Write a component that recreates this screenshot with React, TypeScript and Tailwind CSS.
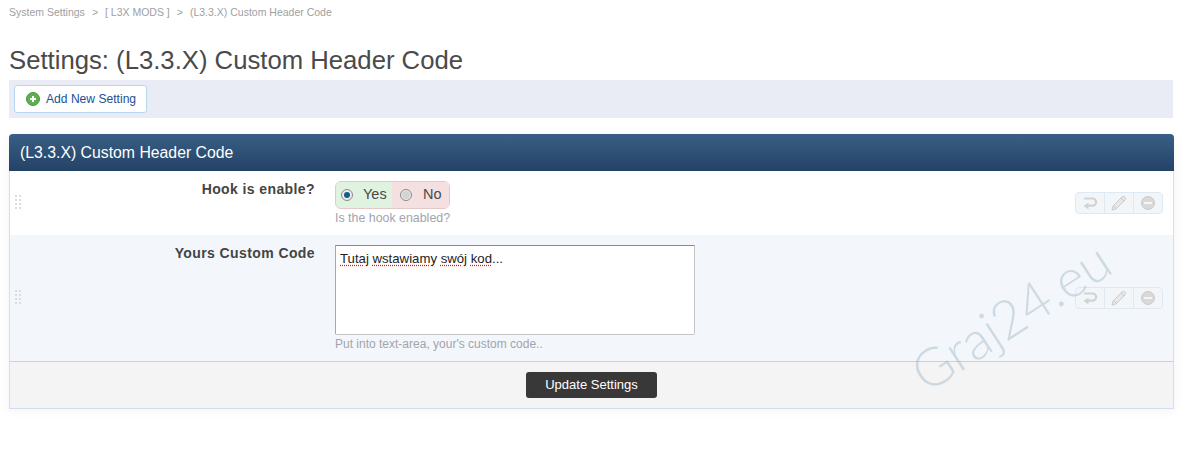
import React from 'react';

const DragHandle: React.FC = () => (
  <div className="grid grid-cols-2 gap-x-[2px] gap-y-[2px] w-[6px] shrink-0">
    {Array.from({ length: 8 }).map((_, i) => (
      <span key={i} className="w-[2px] h-[2px] bg-[#dcdcdc]" />
    ))}
  </div>
);

const RowControls: React.FC = () => (
  <div className="flex h-[22px] w-[88px] rounded-[4px] border border-[#dfe9f3] overflow-hidden bg-[#f3f6f9] divide-x divide-[#dfe9f3]">
    <button className="flex-1 flex items-center justify-center">
      <svg width="16" height="14" viewBox="0 0 16 14" fill="none">
        <path d="M2 2.5h8.5a3.6 3.6 0 0 1 0 7.2H6" stroke="#d2d2d2" strokeWidth="2.2" />
        <path d="M6.5 6.5L1.5 10l5 3.5z" fill="#d2d2d2" />
      </svg>
    </button>
    <button className="flex-1 flex items-center justify-center">
      <svg width="16" height="16" viewBox="0 0 16 16" fill="none">
        <path d="M1 15l1-4L11 2c1-1 2-1 3 0s1 2 0 3l-9 9z" fill="#e8e8e8" stroke="#cbcbcb" />
        <path d="M3 11l2 2M10 3l3 3" stroke="#cbcbcb" />
      </svg>
    </button>
    <button className="flex-1 flex items-center justify-center">
      <span className="w-[14px] h-[14px] rounded-full bg-[#d9d9d9] border border-[#cacaca] flex items-center justify-center">
        <span className="w-[8px] h-[2px] bg-[#f5f5f5]" />
      </span>
    </button>
  </div>
);

const Radio: React.FC<{ checked?: boolean }> = ({ checked }) => (
  <span className="w-[12px] h-[12px] rounded-full border border-[#8a8a8a] bg-[#ececec] flex items-center justify-center shrink-0">
    {checked ? <span className="w-[6px] h-[6px] rounded-full bg-[#0f5f8f]" /> : <span className="w-[8px] h-[8px] rounded-full bg-[#d4d4d4]" />}
  </span>
);

const Spell: React.FC<{ children: React.ReactNode }> = ({ children }) => (
  <span className="underline decoration-dotted decoration-[#d02020] underline-offset-2">{children}</span>
);

export default function App() {
  return (
    <div className="relative w-[1182px] h-[449px] overflow-hidden bg-white font-['Liberation_Sans',Arial,sans-serif] text-[#444]">
      <div className="pl-[9px] pt-[6px] h-[47px] text-[10.5px] leading-[13px] text-[#a0a0a0] flex gap-[7px] items-start">
        <span>System Settings</span>
        <span>&gt;</span>
        <span>[ L3X MODS ]</span>
        <span>&gt;</span>
        <span>(L3.3.X) Custom Header Code</span>
      </div>

      <h1 className="pl-[9px] h-[27px] text-[25.7px] leading-[27px] font-normal text-[#4a4a4a] whitespace-nowrap">
        Settings: (L3.3.X) Custom Header Code
      </h1>

      <div className="ml-[9px] mt-[6px] w-[1164px] h-[38px] bg-[#e9ecf4] flex items-center pl-[5px]">
        <button className="h-[28px] w-[133px] bg-white border border-[#b6d6f2] rounded-[3px] flex items-center pl-[11px] gap-[6px] text-[12.1px] text-[#1d4f91]">
          <span className="w-[14px] h-[14px] rounded-full bg-[#5cb04e] border border-[#4a9440] flex items-center justify-center">
            <svg width="8" height="8" viewBox="0 0 8 8"><path d="M4 1v6M1 4h6" stroke="#fff" strokeWidth="2" /></svg>
          </span>
          Add New Setting
        </button>
      </div>

      <div className="ml-[9px] mt-[16px] w-[1165px] h-[275px] rounded-t-[4px] border-x border-b border-[#cfe1f1] shadow-[0_2px_12px_rgba(0,0,0,0.05)] flex flex-col">
        <div className="-mx-px h-[37px] rounded-t-[4px] bg-gradient-to-b from-[#3a5e85] to-[#234366] text-white text-[15.8px] leading-[37px] pl-[11px] shrink-0">
          (L3.3.X) Custom Header Code
        </div>

        <div className="h-[64px] flex bg-white shrink-0 relative">
          <div className="w-[25px] flex items-center pl-[5px] pb-[2px]"><DragHandle /></div>
          <label className="w-[280px] text-right font-bold text-[14px] tracking-[0.4px] leading-[15px] pt-[11px] text-[#444]">Hook is enable?</label>
          <div className="ml-[20px] pt-[10px] flex-1">
            <div className="flex w-[115px] h-[28px] rounded-[6px] overflow-hidden border border-[#e3c8c8] text-[14.5px] text-[#4a4a4a]">
              <div className="w-[57px] -ml-px -my-px pl-[5px] bg-[#e0f3e0] border border-r-0 border-[#bfe3bf] rounded-l-[6px] flex items-center gap-[10px]">
                <Radio checked /> Yes
              </div>
              <div className="flex-1 bg-[#f4e0e0] flex items-center pl-[8px] gap-[11px]">
                <Radio /> No
              </div>
            </div>
            <div className="mt-[2px] text-[12.4px] leading-[14px] text-[#a3a3ad]">Is the hook enabled?</div>
          </div>
          <div className="pr-[10px] flex items-center"><RowControls /></div>
        </div>

        <div className="h-[126px] flex bg-[#f3f7fb] shrink-0">
          <div className="w-[25px] flex items-center pl-[5px] pb-[2px]"><DragHandle /></div>
          <label className="w-[280px] text-right font-bold text-[14px] tracking-[0.4px] leading-[15px] pt-[11px] text-[#444]">Yours Custom Code</label>
          <div className="ml-[20px] pt-[10px] flex-1">
            <div className="w-[360px] h-[90px] bg-white border border-[#c4c4c4] border-t-[#8a8a8a] border-l-[#a8a8a8] rounded-b-[2px] px-[4px] pt-[4px] text-[13.2px] leading-[18px] text-[#222]">
              <Spell>Tutaj</Spell> <Spell>wstawiamy</Spell> <Spell>swój</Spell> <Spell>kod</Spell>...
            </div>
            <div className="mt-[2px] text-[12px] leading-[14px] text-[#a3a3ad]">Put into text-area, your's custom code..</div>
          </div>
          <div className="pr-[10px] flex items-center"><RowControls /></div>
        </div>

        <div className="flex-1 bg-[#f4f4f4] border-t border-[#d0d0d0] flex justify-center pt-[10px]">
          <button className="h-[26px] w-[131px] rounded-[3px] bg-[#383838] text-white text-[13px]">Update Settings</button>
        </div>
      </div>

      <div className="absolute left-[916px] top-[347px] origin-left -rotate-[33deg] text-[53px] leading-[60px] font-light font-['Lato',sans-serif] text-[#9fb6c8]/45 whitespace-nowrap pointer-events-none">
        Graj24.eu
      </div>
    </div>
  );
}
